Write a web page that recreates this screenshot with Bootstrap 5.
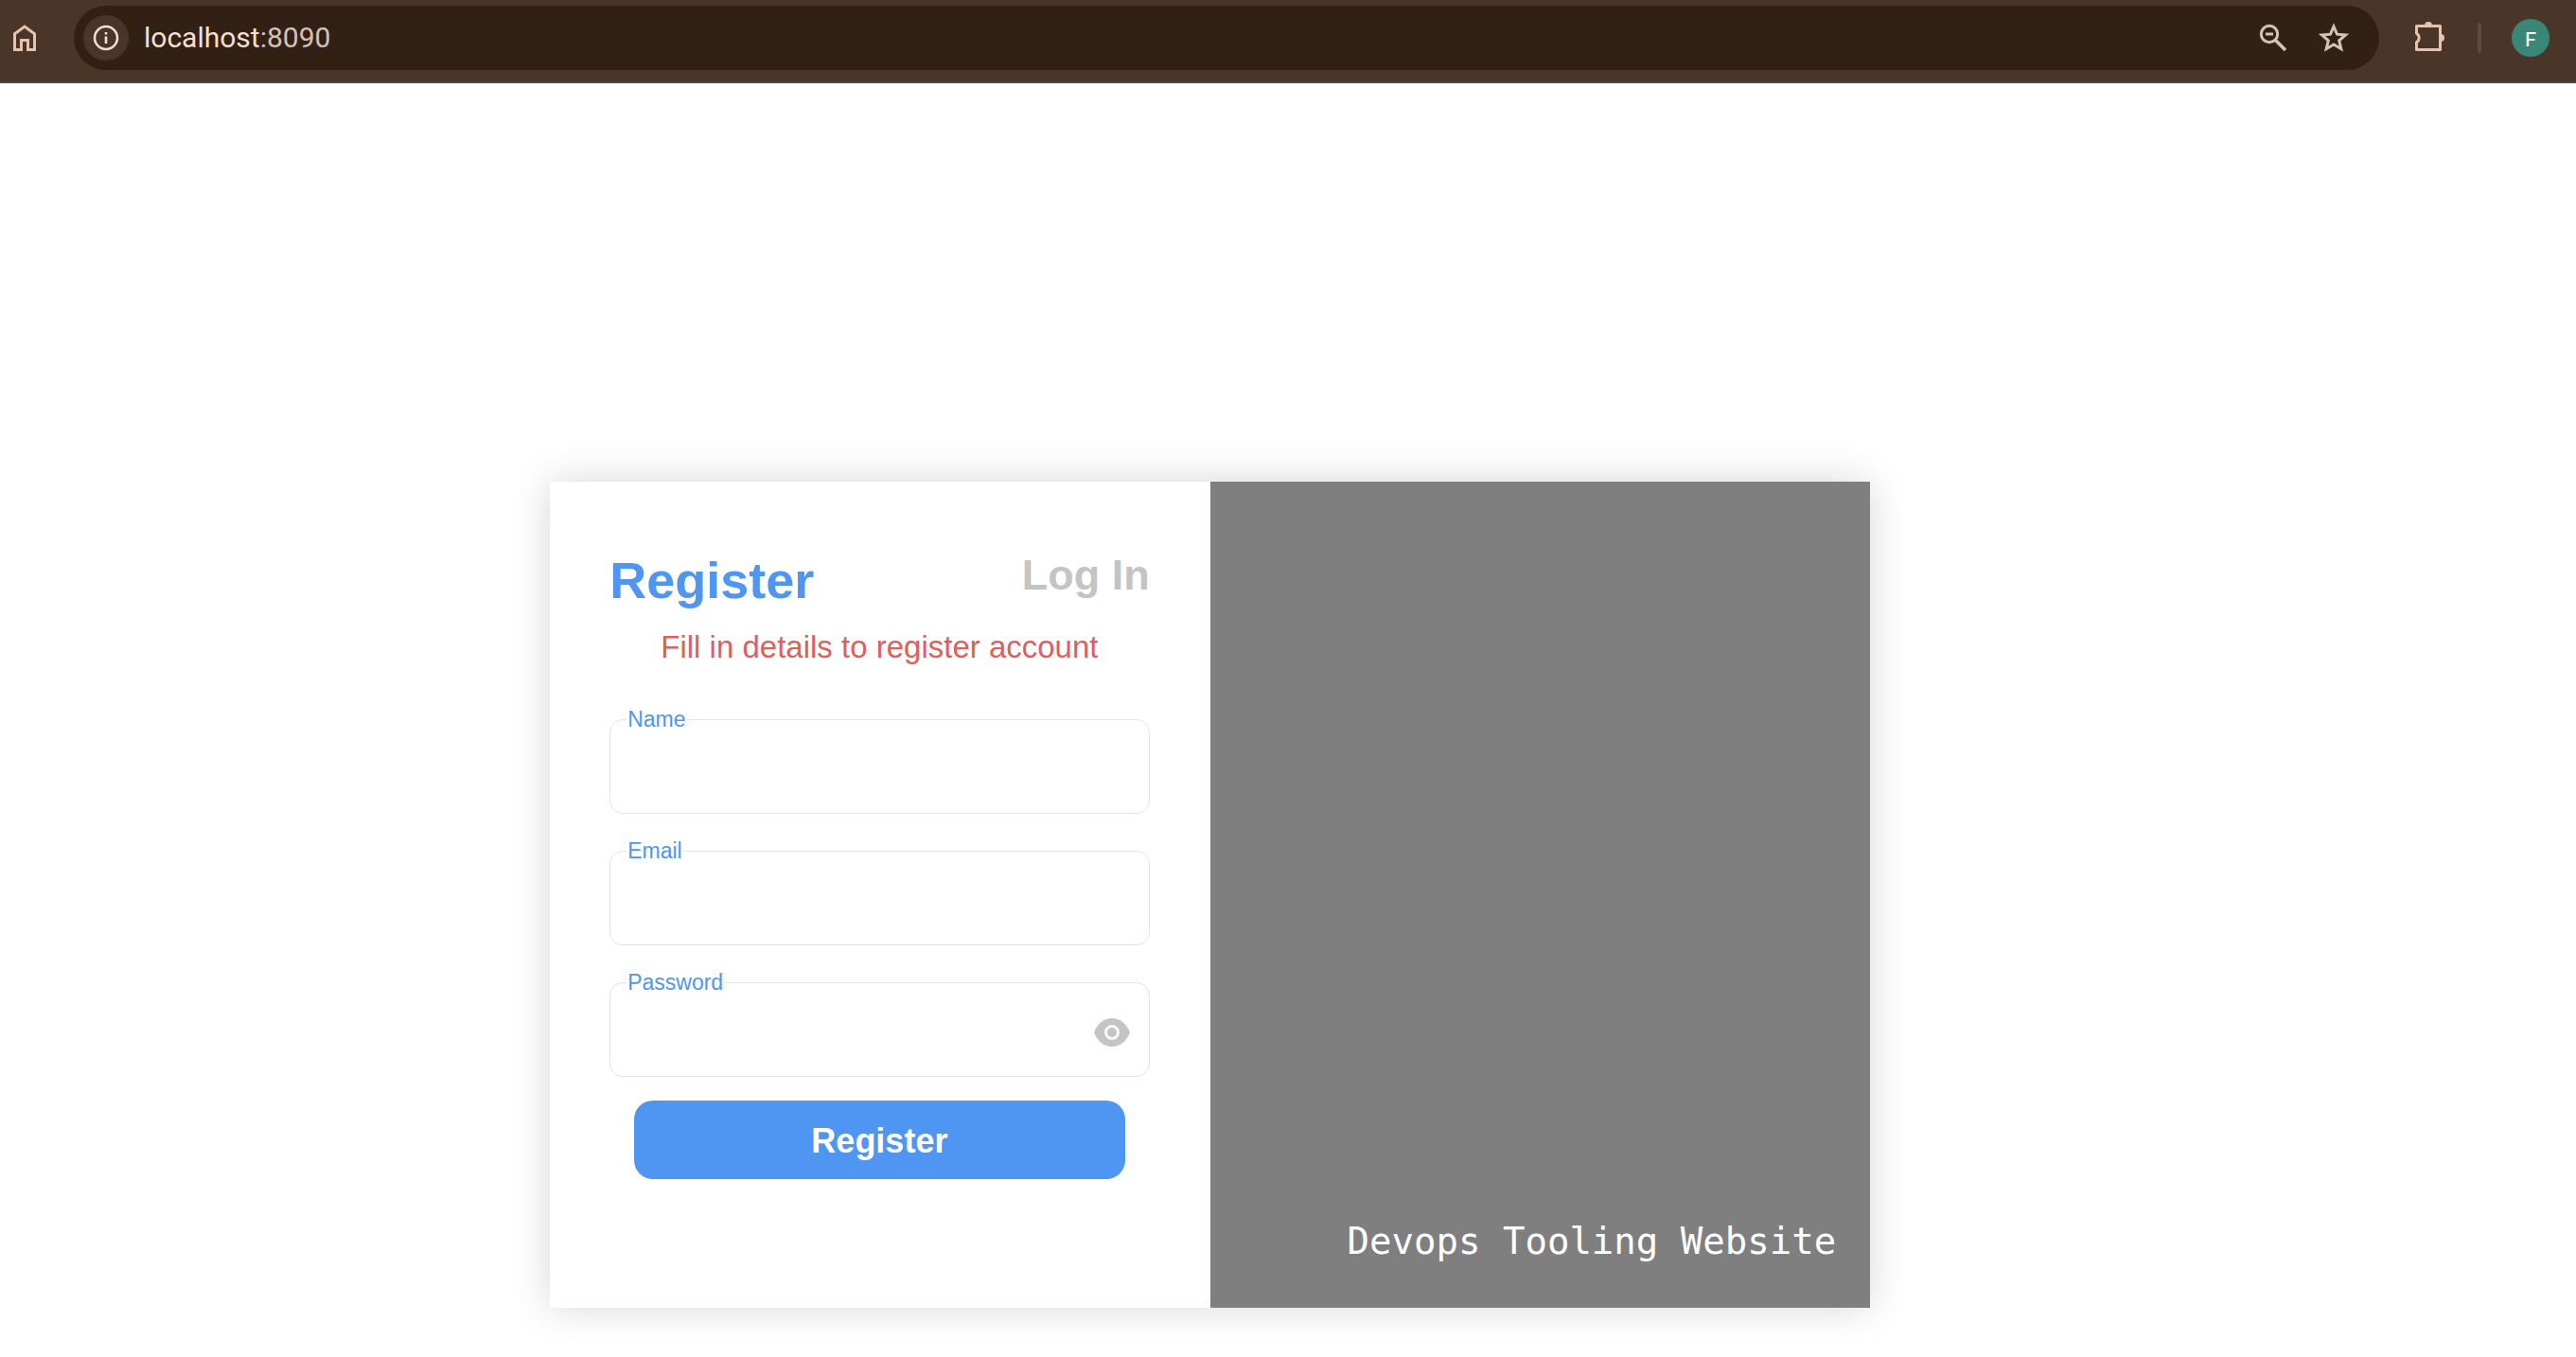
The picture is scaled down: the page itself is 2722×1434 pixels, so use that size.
<!DOCTYPE html>
<html lang="en">
<head>
<meta charset="utf-8">
<meta name="viewport" content="width=device-width, initial-scale=1">
<title>Devops Tooling Website</title>
<link href="https://cdn.jsdelivr.net/npm/bootstrap@5.3.0/dist/css/bootstrap.min.css" rel="stylesheet">
<style>
  body { font-family: "Liberation Sans", Arial, sans-serif; background: #fff; }
  .chrome-bar { background: #4a3628; border-bottom: 2px solid #4d4541; padding: 6px 28px 12px 8px; }
  .chrome-bar button { background: none; border: 0; padding: 0; line-height: 0; }
  .home-btn { width: 36px; margin-right: 34px; }
  .address { background: #332014; border-radius: 34px; height: 68px; padding: 0 28px 0 10px; }
  .address .site-info { width: 48px; height: 48px; border-radius: 50%; background: #4a3628; }
  .address-text { font-family: Roboto, sans-serif; font-size: 30px; line-height: 40px; color: #f3dfd4; margin-left: 16px; min-width: 0; }
  .address-text .port { color: #d3c2b9; }
  .bar-tools { margin-left: 32px; }
  .bar-rule { width: 4px; height: 32px; border-radius: 2px; background: #66493c; margin: 0 32px; }
  .chrome-bar .avatar { width: 40px; height: 40px; border-radius: 50%; background: #3a877a; color: #fff; font: 22px Lato, sans-serif; }
  .auth-area { padding: 421px 0 52px; }
  .auth-box { width: 51.25%; margin-left: 21.35%; box-shadow: 0 0 40px rgba(0,0,0,.16); }
  .form-side { background: #fff; padding: 63px 64px 136px 63px; }
  .tabs-row { height: 82px; padding-top: 8px; }
  .tab-on { font-size: 54px; line-height: 66px; font-weight: 700; color: #4e96f1; }
  .tab-off { font-size: 45px; line-height: 56px; font-weight: 700; color: #c4c4c4; }
  .hint { font-size: 33px; line-height: 40px; color: #db615c; margin: 10px 0 56px; }
  .field-box { height: 100px; margin-bottom: 39px; }
  .field-box input { height: 100%; border: 1px solid #e4e4e4; border-radius: 14px; font-size: 30px; padding: 12px 20px; }
  .field-box label { position: absolute; left: 18px; top: -14px; background: #fff; padding: 0 1px; font-size: 23px; line-height: 28px; color: #4e96f1; }
  .field-box .peek { position: absolute; right: 20px; top: 31px; background: none; border: 0; padding: 0; line-height: 0; }
  .submit-btn { height: 83px; margin: -14px 26px 0; padding: 2px 0 0; border: 0; border-radius: 20px; background: #4e96f1; color: #fff; font-size: 36px; font-weight: 700; }
  .brand-side { background: #7f7f7f; color: #fff; padding: 0 36px 46px; font-family: "DejaVu Sans Mono", monospace; font-size: 39px; line-height: 48px; }
</style>
<script src="https://cdn.jsdelivr.net/npm/bootstrap@5.3.0/dist/js/bootstrap.bundle.min.js"></script>
</head>
<body>
<header class="chrome-bar d-flex align-items-center">
  <button class="home-btn" type="button" aria-label="Home">
    <svg width="36" height="36" viewBox="0 0 36 36" fill="none" stroke="#e5c3ad" stroke-width="3"><path d="M7.500 30.500V13.800L18 6l10.500 7.800v16.700h-7V20.500h-7v10z"/></svg>
  </button>
  <div class="address d-flex align-items-center flex-grow-1">
    <button class="site-info d-flex align-items-center justify-content-center" type="button" aria-label="Site information">
      <svg width="28" height="28" viewBox="0 0 28 28"><circle cx="14" cy="14" r="12" fill="none" stroke="#f3dfd4" stroke-width="2.500"/><path d="M12.700 12.500h2.600V20h-2.600zM12.700 8h2.600v2.600h-2.600z" fill="#f3dfd4"/></svg>
    </button>
    <div class="address-text flex-grow-1">localhost<span class="port">:8090</span></div>
    <div class="d-flex align-items-center gap-4">
      <button type="button" aria-label="Zoom out">
        <svg width="40" height="40" viewBox="0 0 40 40" fill="none" stroke="#d3c2b9" stroke-width="3"><circle cx="16" cy="16" r="8.700"/><path d="M22 22l11 11" stroke-width="3.600"/><path d="M12 16h8"/></svg>
      </button>
      <button type="button" aria-label="Bookmark">
        <svg width="40" height="40" viewBox="0 0 40 40" fill="none" stroke="#d3c2b9" stroke-width="3"><path d="M20 8l3.500 8.200 9 .800-6.800 5.900 2.100 8.800L20 27l-7.800 4.700 2.100-8.800L7.500 17l9-.800z"/></svg>
      </button>
    </div>
  </div>
  <div class="bar-tools d-flex align-items-center">
    <button type="button" aria-label="Extensions">
      <svg width="40" height="40" viewBox="0 0 40 40"><path d="M7.500 7.500h25v25h-25v-7.800a5.500 5.500 0 0 0 0-9.400z" fill="none" stroke="#e5c3ad" stroke-width="3" stroke-linejoin="round"/><path d="M16 7a4 4 0 0 1 8 0zM33 16a4 4 0 0 1 0 8z" fill="#e5c3ad"/></svg>
    </button>
    <div class="bar-rule"></div>
    <button class="avatar" type="button">F</button>
  </div>
</header>
<main class="auth-area">
  <div class="auth-box">
    <div class="row g-0">
      <form class="form-side col-6">
        <div class="tabs-row d-flex justify-content-between align-items-start">
          <a class="tab-on text-decoration-none" href="#register">Register</a>
          <a class="tab-off text-decoration-none" href="#login">Log In</a>
        </div>
        <p class="hint text-center">Fill in details to register account</p>
        <div class="field-box position-relative">
          <input class="w-100" type="text" id="name">
          <label for="name">Name</label>
        </div>
        <div class="field-box position-relative">
          <input class="w-100" type="email" id="email">
          <label for="email">Email</label>
        </div>
        <div class="field-box position-relative">
          <input class="w-100" type="password" id="password">
          <label for="password">Password</label>
          <button class="peek" type="button" aria-label="Show password">
            <svg width="40" height="44" viewBox="0 0 40 44"><path d="M1 22C5 12 12 7 20 7s15 5 19 15c-4 10-11 15-19 15S5 32 1 22z" fill="#c4c4c4"/><circle cx="20" cy="22" r="6.500" fill="none" stroke="#f8f8f8" stroke-width="3"/></svg>
          </button>
        </div>
        <div class="d-grid">
          <button class="submit-btn" type="submit">Register</button>
        </div>
      </form>
      <div class="brand-side col-6 d-flex align-items-end justify-content-end">
        <div>Devops Tooling Website</div>
      </div>
    </div>
  </div>
</main>
</body>
</html>
